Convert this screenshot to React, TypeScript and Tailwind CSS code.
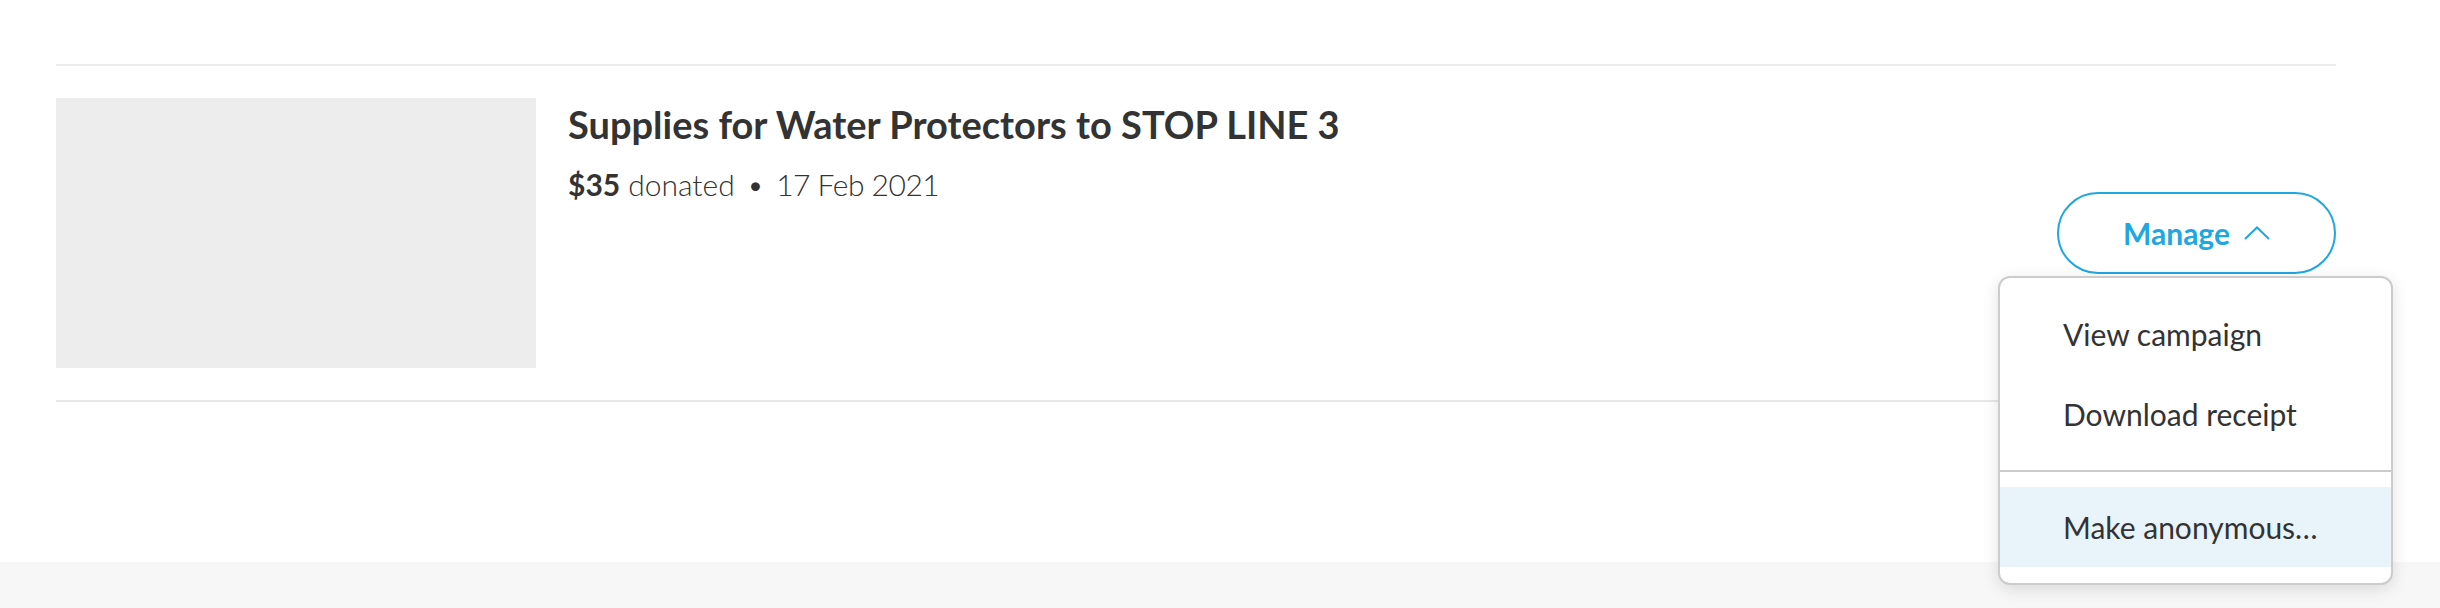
import React from 'react';

const font = { fontFamily: 'Lato, "Noto Sans", sans-serif' };

function ChevronUp() {
  return (
    <svg width="26" height="14" viewBox="0 0 26 14" fill="none" className="shrink-0">
      <polyline points="1,13 13,1.5 25,13" stroke="currentColor" strokeWidth="2" />
    </svg>
  );
}

function ManageMenu() {
  return (
    <div className="absolute right-[-57px] top-[calc(100%+2px)] w-[395px] rounded-[12px] border-2 border-[#cccccc] bg-white py-[16px] shadow-[0_4px_16px_rgba(0,0,0,0.12)] z-10">
      <div className="h-[80px] px-[63px] flex items-center text-[30px] text-[#333333]">View campaign</div>
      <div className="h-[80px] px-[63px] flex items-center text-[30px] text-[#333333]">Download receipt</div>
      <div className="mt-[16px] mb-[15px] h-[2px] bg-[#cccccc]" />
      <div className="h-[80px] px-[63px] flex items-center text-[30px] text-[#333333] bg-[#e8f4fa]">Make anonymous…</div>
    </div>
  );
}

export default function App() {
  return (
    <div className="w-[2440px] h-[608px] bg-white flex flex-col overflow-hidden" style={font}>
      <div className="flex-1 pt-[64px]">
        <div className="ml-[56px] w-[2280px]">
          <div className="h-[2px] bg-[#ebebeb]" />
          <div className="flex py-[32px] gap-[32px]">
            <div className="w-[480px] h-[270px] bg-[#ededed] shrink-0" />
            <div className="flex-1 flex justify-between">
              <div className="text-[#333333]">
                <h2 className="text-[38px] leading-[44px] font-bold mt-[4px]">Supplies for Water Protectors to STOP LINE 3</h2>
                <div className="mt-[18px] text-[30px] leading-[40px] flex items-center">
                  <span className="font-bold">$35</span>
                  <span className="font-light ml-[8px]">donated</span>
                  <span className="mx-[12px] font-light">•</span>
                  <span className="font-light tracking-[-0.5px]">17 Feb 2021</span>
                </div>
              </div>
              <div className="relative self-start mt-[94px]">
                <button className="w-[279px] h-[82px] rounded-full border-2 border-[#1fa7e0] bg-white flex items-center justify-center gap-[14px] text-[#1fa7e0] text-[30px] font-bold">
                  Manage
                  <ChevronUp />
                </button>
                <ManageMenu />
              </div>
            </div>
          </div>
          <div className="h-[2px] bg-[#e8e8e8]" />
        </div>
      </div>
      <div className="h-[46px] bg-[#f7f7f7]" />
    </div>
  );
}
